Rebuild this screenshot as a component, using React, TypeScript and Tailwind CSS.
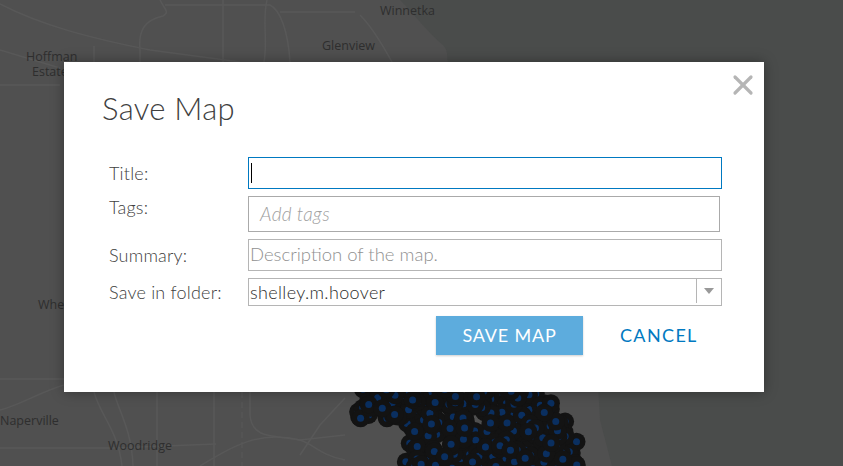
import { X } from "lucide-react";

// Deterministic scatter for the point cluster on the map
function buildDots() {
  const dots: { x: number; y: number }[] = [];
  let seed = 17;
  const rand = () => {
    seed = (seed * 9301 + 49297) % 233280;
    return seed / 233280;
  };
  while (dots.length < 320) {
    const y = 388 + rand() * 82;
    const x = 345 + rand() * 240;
    const left = y < 420 ? 355 : 405;
    const right = y < 402 ? 542 : y < 420 ? 553 : y < 440 ? 566 : 577;
    if (x < left || x > right) continue;
    dots.push({ x, y });
  }
  return dots;
}

const dots = buildDots();

const labels = [
  { x: 380, y: 15, text: "Winnetka" },
  { x: 322, y: 50, text: "Glenview" },
  { x: 26, y: 61, text: "Hoffman" },
  { x: 32, y: 76, text: "Estates" },
  { x: 38, y: 309, text: "Wheaton" },
  { x: 0, y: 425, text: "Naperville" },
  { x: 108, y: 450, text: "Woodridge" },
];

function MapBackground() {
  return (
    <svg className="absolute inset-0 h-[466px] w-[843px]" viewBox="0 0 843 466">
      <rect width="843" height="466" fill="#4a4c4b" />
      <path d="M0 0H400C415 15 430 35 443 45C450 52 445 60 450 70L590 240L600 420L612 466H0Z" fill="#505050" />
      <g fill="none" stroke="#585858" strokeWidth="1.5">
        <path d="M0 4C40 25 90 38 150 50L240 62" />
        <path d="M160 0C165 10 170 12 163 16C145 20 138 30 140 50V62" />
        <path d="M165 5H270C280 10 288 30 290 62" />
        <path d="M0 50L60 68M94 46V62M223 0V62" />
        <path d="M267 0C262 20 268 40 264 62M355 12H280M360 15C375 30 385 50 392 62M0 85H60" />
        <path d="M0 379H64M0 410C20 405 40 392 64 385" />
        <path d="M94 392C100 415 118 430 122 466M114 392C118 410 132 430 133 466" />
        <path d="M157 392V466M214 392V466" />
        <path d="M0 448H114L216 444" />
        <path d="M250 392V415C252 440 275 435 300 440C315 445 320 455 345 460" />
        <path d="M200 466C235 445 260 430 300 440L345 435" />
        <path d="M300 455L320 425L345 398" />
      </g>
      <path d="M242 392V466" stroke="#585858" strokeWidth="1" strokeDasharray="6 4" />
      {dots.map((d, i) => (
        <g key={i}>
          <circle cx={d.x} cy={d.y} r="9" fill="#131313" />
          <circle cx={d.x} cy={d.y} r="3.5" fill="#0a2f60" />
        </g>
      ))}
      <g fill="#2e2e2e" fontSize="12.5" fontFamily="'Open Sans', sans-serif">
        {labels.map((l) => (
          <text key={l.text} x={l.x} y={l.y}>
            {l.text}
          </text>
        ))}
      </g>
    </svg>
  );
}

export default function App() {
  return (
    <div className="relative h-[466px] w-[843px] overflow-hidden font-['Lato',sans-serif]">
      <MapBackground />

      <div className="absolute top-[62px] left-[64px] flex h-[330px] w-[700px] flex-col bg-white pt-[28px] shadow-[0_0_12px_rgba(0,0,0,0.35)]">
        <button className="absolute top-[7px] right-[5px] text-[#b5b5b5]">
          <X size={32} strokeWidth={2.4} />
        </button>

        <h2 className="ml-[38px] text-[31px] leading-[36px] font-light tracking-[0.3px] text-[#404040]">Save Map</h2>

        <div className="mt-[31px] ml-[45px] flex flex-col text-[18px] font-light tracking-[0.2px] text-[#404040]">
          <div className="flex items-center">
            <label className="w-[139px]">Title:</label>
            <div className="flex h-[32px] w-[474px] items-center border-[1.5px] border-[#0079c1] pl-[2px]">
              <div className="h-[20px] w-px bg-black" />
            </div>
          </div>

          <div className="mt-[7px] flex">
            <label className="w-[139px] leading-[22px]">Tags:</label>
            <div className="flex h-[36px] w-[472px] items-center border-[1.5px] border-[#aaaaaa] pl-[11px] text-[19px] tracking-[0.3px] text-[#a0a0a0] italic">
              Add tags
            </div>
          </div>

          <div className="mt-[7px] flex items-center">
            <label className="w-[139px]">Summary:</label>
            <div className="flex h-[32px] w-[474px] items-center border border-[#b5b5b5] pl-[1px] text-[18.5px] tracking-[0px] text-[#909090]">
              Description of the map.
            </div>
          </div>

          <div className="mt-[7px] flex items-center">
            <label className="w-[139px]">Save in folder:</label>
            <div className="flex h-[28px] w-[474px] items-center border border-[#b5b5b5] pl-[1px]">
              <span className="flex-1 text-[18px] tracking-[0.35px] text-[#2b2b2b]">shelley.m.hoover</span>
              <div className="flex h-[24px] w-[25px] items-center justify-center self-start border-l border-[#b5b5b5]">
                <div className="h-0 w-0 border-x-[5px] border-t-[6px] border-x-transparent border-t-[#999999]" />
              </div>
            </div>
          </div>
        </div>

        <div className="mt-[10px] ml-[372px] flex items-center">
          <button className="h-[39px] w-[147px] bg-[#5dacdd] text-[18px] tracking-[0.8px] text-white shadow-[0_1px_2px_rgba(0,0,0,0.2)]">
            SAVE MAP
          </button>
          <button className="ml-[37px] text-[18px] tracking-[1.35px] text-[#0079c1]">CANCEL</button>
        </div>
      </div>
    </div>
  );
}
